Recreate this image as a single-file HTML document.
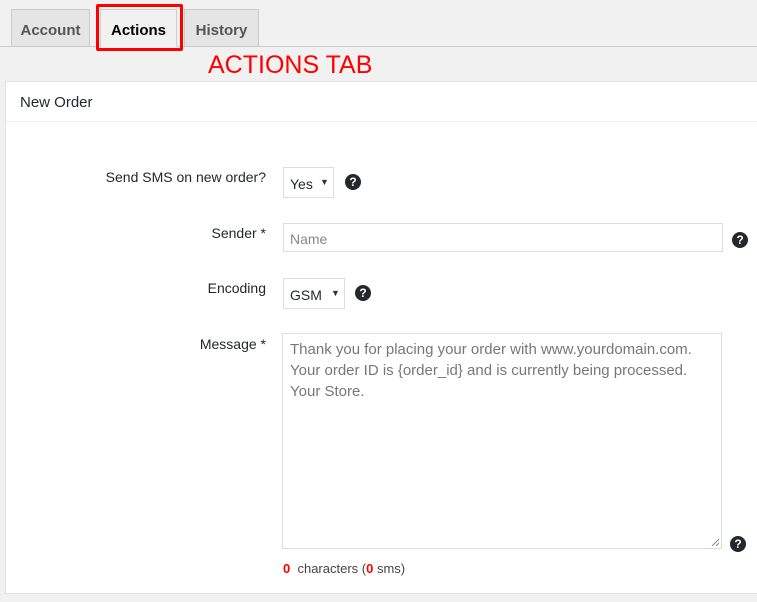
<!DOCTYPE html>
<html><head><style>
body{margin:0;width:757px;height:602px;background:#f1f1f1;font-family:"Liberation Sans",sans-serif;color:#23282d;position:relative;overflow:hidden;font-size:14px}
.a{position:absolute}
.tab{position:absolute;top:9px;height:37px;border:1px solid #ccc;border-bottom:none;background:#e5e5e5;color:#555;font-size:15px;font-weight:bold;text-align:center;line-height:41px;box-sizing:border-box}
.line{position:absolute;left:0;top:46px;width:757px;height:1px;background:#ccc}
.panel{position:absolute;left:5px;top:81px;width:760px;height:513px;background:#fff;border:1px solid #e2e2e2;box-sizing:border-box}
.lbl{position:absolute;right:491px;font-size:14px;color:#23282d}
.box{position:absolute;border:1px solid #ddd;background:#fff;box-sizing:border-box}
.q{position:absolute;width:16px;height:16px;border-radius:50%;background:#23282d;color:#fff;font-size:12px;font-weight:bold;text-align:center;line-height:16px}
.arr{position:absolute;font-size:9px;color:#333}
</style></head><body>
<div class="line"></div>
<div class="tab" style="left:11px;width:79px">Account</div>
<div class="tab" style="left:100px;width:77px;height:38px;background:#f1f1f1;color:#000">Actions</div>
<div class="a" style="left:96px;top:4px;width:87px;height:47px;border:3px solid #f00;box-sizing:border-box;border-radius:2px"></div>
<div class="tab" style="left:184px;width:75px">History</div>
<div class="a" style="left:208px;top:51px;font-size:25px;color:#f00">ACTIONS TAB</div>
<div class="panel">
<div class="a" style="left:14px;top:12px;font-size:15px">New Order</div>
<div class="a" style="left:0;top:39px;width:760px;height:1px;background:#eee"></div>
</div>
<div class="lbl" style="top:169px">Send SMS on new order?</div>
<div class="box" style="left:283px;top:167px;width:51px;height:31px"><span class="a" style="left:6px;top:8px;font-size:14px">Yes</span><span class="arr" style="left:36px;top:9px">▼</span></div>
<div class="q" style="left:345px;top:174px">?</div>
<div class="lbl" style="top:225px">Sender *</div>
<div class="box" style="left:283px;top:223px;width:440px;height:29px"><span class="a" style="left:6px;top:7px;color:#888">Name</span></div>
<div class="q" style="left:732px;top:232px">?</div>
<div class="lbl" style="top:280px">Encoding</div>
<div class="box" style="left:283px;top:278px;width:62px;height:31px"><span class="a" style="left:6px;top:8px">GSM</span><span class="arr" style="left:47px;top:9px">▼</span></div>
<div class="q" style="left:355px;top:285px">?</div>
<div class="lbl" style="top:336px">Message *</div>
<div class="box" style="left:282px;top:333px;width:440px;height:216px"><div class="a" style="left:7px;top:5px;color:#777;line-height:21px;font-size:15px">Thank you for placing your order with www.yourdomain.com.<br>Your order ID is {order_id} and is currently being processed.<br>Your Store.</div>
<svg class="a" style="right:2px;bottom:2px" width="8" height="8"><path d="M8 1L1 8M8 5L5 8" stroke="#888" stroke-width="1"/></svg></div>
<div class="q" style="left:730px;top:536px">?</div>
<div class="a" style="left:283px;top:561px;font-size:13px;color:#444"><b style="color:#f00">0</b>&nbsp; characters (<b style="color:#f00">0</b> sms)</div>
</body></html>
